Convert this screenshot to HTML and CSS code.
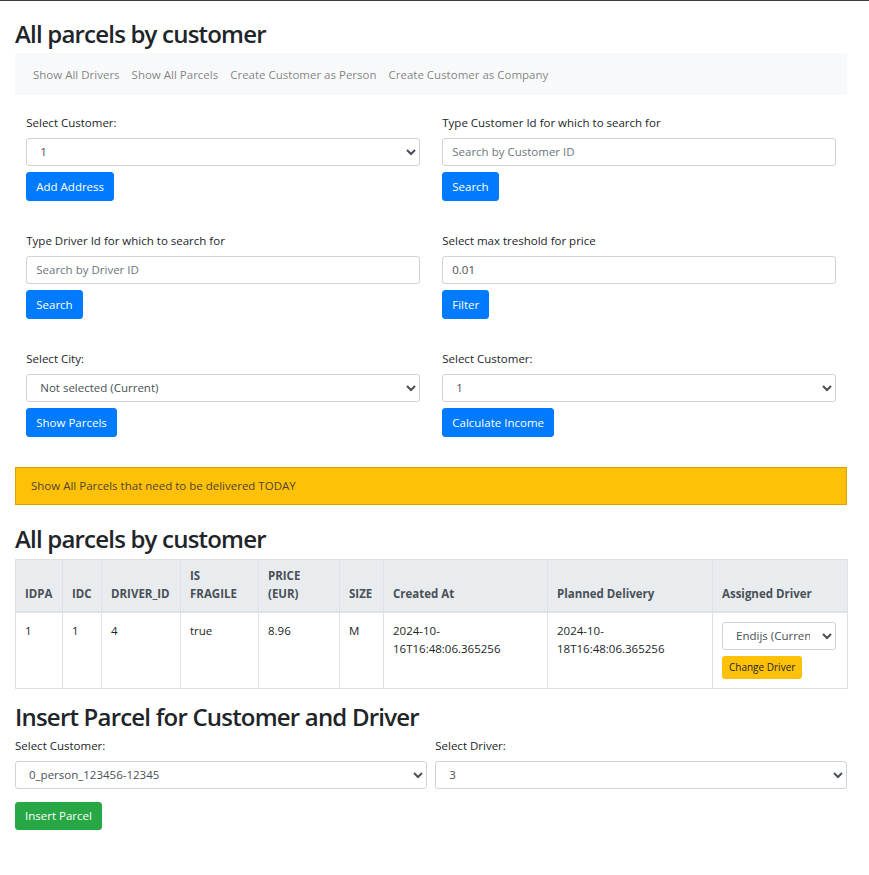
FILE: index.html
```html
<!DOCTYPE html>
<html lang="en">
<head>
<meta charset="utf-8">
<title>All parcels by customer</title>
<link rel="stylesheet" href="styles.css">
</head>
<body>
<div class="page">
  <h2 class="title first">All parcels by customer</h2>
  <nav class="navbar">
    <a class="nav-link" href="#">Show All Drivers</a>
    <a class="nav-link" href="#">Show All Parcels</a>
    <a class="nav-link" href="#">Create Customer as Person</a>
    <a class="nav-link" href="#">Create Customer as Company</a>
  </nav>

  <div class="filters">
    <div class="group">
      <label class="lbl">Select Customer:</label>
      <select class="control"><option>1</option></select>
      <button class="btn btn-primary">Add Address</button>
    </div>
    <div class="group">
      <label class="lbl">Type Customer Id for which to search for</label>
      <input class="control" type="text" placeholder="Search by Customer ID">
      <button class="btn btn-primary">Search</button>
    </div>
    <div class="group">
      <label class="lbl">Type Driver Id for which to search for</label>
      <input class="control" type="text" placeholder="Search by Driver ID">
      <button class="btn btn-primary">Search</button>
    </div>
    <div class="group">
      <label class="lbl">Select max treshold for price</label>
      <input class="control" type="text" value="0.01">
      <button class="btn btn-primary">Filter</button>
    </div>
    <div class="group">
      <label class="lbl">Select City:</label>
      <select class="control"><option>Not selected (Current)</option></select>
      <button class="btn btn-primary">Show Parcels</button>
    </div>
    <div class="group">
      <label class="lbl">Select Customer:</label>
      <select class="control"><option>1</option></select>
      <button class="btn btn-primary">Calculate Income</button>
    </div>
  </div>

  <div class="today">Show All Parcels that need to be delivered TODAY</div>

  <h2 class="title second">All parcels by customer</h2>
  <table class="parcels">
    <colgroup>
      <col style="width:47px"><col style="width:39px"><col style="width:79px"><col style="width:78px"><col style="width:81px"><col style="width:44px"><col style="width:164px"><col style="width:165px"><col style="width:135px">
    </colgroup>
    <thead>
      <tr>
        <th>IDPA</th><th>IDC</th><th>DRIVER_ID</th><th>IS FRAGILE</th><th>PRICE (EUR)</th><th>SIZE</th><th>Created At</th><th>Planned Delivery</th><th>Assigned Driver</th>
      </tr>
    </thead>
    <tbody>
      <tr>
        <td>1</td><td>1</td><td>4</td><td>true</td><td>8.96</td><td>M</td>
        <td>2024-10-16T16:48:06.365256</td>
        <td>2024-10-18T16:48:06.365256</td>
        <td>
          <select class="control driver-select"><option>Endijs (Current)</option></select>
          <button class="btn btn-sm btn-warning">Change Driver</button>
        </td>
      </tr>
    </tbody>
  </table>

  <h2 class="title third">Insert Parcel for Customer and Driver</h2>
  <div class="insert">
    <div class="group">
      <label class="lbl">Select Customer:</label>
      <select class="control"><option>0_person_123456-12345</option></select>
    </div>
    <div class="group">
      <label class="lbl">Select Driver:</label>
      <select class="control"><option>3</option></select>
    </div>
  </div>
  <button class="btn btn-success insert-btn">Insert Parcel</button>
</div>
</body>
</html>
```

FILE: styles.css
```css
* { box-sizing: border-box; }

body {
  margin: 0;
  border-top: 1px solid #3c3c3c;
  font-family: "Open Sans", "Noto Sans", sans-serif;
  font-size: 11.5px;
  line-height: 18px;
  color: #212529;
  background: #fff;
}

.page {
  padding: 0 22px 40px 15px;
}

.title {
  font-size: 24px;
  font-weight: 600;
  letter-spacing: -0.8px;
  line-height: 1.2;
  margin: 0 0 4.5px;
}
.first { margin-top: 19px; }
.second { margin-top: 20px; }
.third { margin-top: 14px; margin-bottom: 5.5px; }

.navbar {
  display: flex;
  align-items: center;
  height: 41.5px;
  padding: 1px 12px 0;
  background: #f8f9fa;
}
.nav-link {
  padding: 0 6px;
  color: rgba(0, 0, 0, 0.5);
  text-decoration: none;
}

.filters {
  display: grid;
  grid-template-columns: 1fr 1fr;
  column-gap: 22.5px;
  row-gap: 31.5px;
  padding: 19.5px 11.25px 0;
  margin-bottom: 30.5px;
}

.group {
  display: flex;
  flex-direction: column;
  align-items: flex-start;
}

.lbl {
  display: block;
  line-height: 18px;
  margin-bottom: 5.5px;
}

.control {
  display: block;
  width: 100%;
  height: 28px;
  padding: 4px 9px;
  font-family: inherit;
  font-size: 11.5px;
  line-height: 18px;
  color: #495057;
  background: #fff;
  border: 1px solid #ced4da;
  border-radius: 3px;
}
.control::placeholder { color: #6c757d; }

.btn {
  display: inline-block;
  height: 28.5px;
  padding: 4px 9px;
  font-family: inherit;
  font-size: 11.5px;
  line-height: 18px;
  font-weight: 400;
  border: 1px solid transparent;
  border-radius: 3px;
  margin-top: 6.5px;
  cursor: pointer;
}
.btn-primary { background: #007bff; border-color: #007bff; color: #fff; }
.btn-success { background: #28a745; border-color: #28a745; color: #fff; }
.btn-warning { background: #ffc107; border-color: #ffc107; color: #212529; }
.btn-sm {
  height: 23px;
  font-size: 10px;
  line-height: 15px;
  padding: 3px 6px;
  border-radius: 2.5px;
  margin-top: 6px;
}

.today {
  background: #ffc107;
  border: 1px solid #dba500;
  padding: 9px 15px;
  line-height: 18px;
  color: #4d4630;
}

.parcels {
  width: 832px;
  table-layout: fixed;
  border-collapse: collapse;
  margin-bottom: 0;
}
.parcels th,
.parcels td {
  border: 1px solid #dee2e6;
  padding: 9px;
  text-align: left;
  line-height: 18px;
}
.parcels th {
  background: #e9ecef;
  color: #495057;
  font-weight: 700;
  vertical-align: bottom;
  border-bottom-width: 2px;
  padding-top: 7px;
  padding-bottom: 8px;
}
.parcels td {
  vertical-align: top;
}
.driver-select {
  width: 114px;
  height: 28.5px;
  margin-top: 0;
}

.insert {
  display: grid;
  grid-template-columns: 1fr 1fr;
  column-gap: 8.5px;
}
.insert-btn {
  margin-top: 13px;
}
```
